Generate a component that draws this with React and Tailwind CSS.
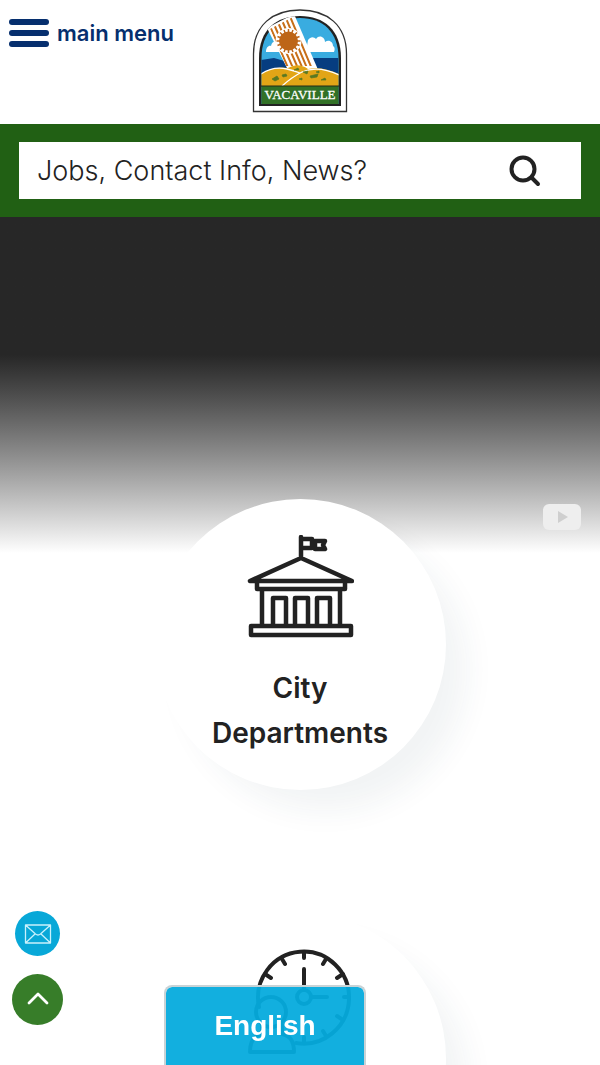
import React from "react";

function TownSeal() {
  return (
    <svg viewBox="0 0 120 125" className="h-[125px] w-[120px]" role="img" aria-label="Vacaville">
      <defs>
        <clipPath id="scene">
          <path d="M21.500 104V58C21.500 32 37 18 60 18S98.500 32 98.500 58V104Z" />
        </clipPath>
        <clipPath id="band">
          <path d="M19 106V58C19 30 36 16 60 16S101 30 101 58V106Z" />
        </clipPath>
        <clipPath id="ray">
          <path d="M30 29L53 17L73 66L46 66Z" />
        </clipPath>
      </defs>
      <path d="M13.5 111.500V54C13.500 25 33 10 60 10S106.500 25 106.500 54V111.500Z" fill="#fff" stroke="#333" strokeWidth="1.300" />
      <path d="M19 106V58C19 30 36 16 60 16S101 30 101 58V106Z" fill="#222" />
      <path d="M21.500 104V58C21.500 32 37 18 60 18S98.500 32 98.500 58V104Z" fill="#39ace0" />
      <g clipPath="url(#scene)">
        <path d="M26 52c0-5 3-7 5-6c1-7 9-5 9 0c3 0 4 3 4 6z" fill="#fff" />
        <path d="M66 52l2-12c3-4 6-3 8-1c3-5 9-2 9 3c4-3 8 0 8 4c2 1 2 4 1 6z" fill="#fff" />
        <path d="M21 60l13-2l14 4l26-4h24.500v16h-77.500z" fill="#063d80" />
      </g>
      <path clipPath="url(#band)" d="M27 28L54 14L79 72L48 70Z" fill="#fff" />
      <g clipPath="url(#ray)">
        <path d="M29 24L49 70M33 22L53 68M37 20L57 66M41 18L62 67M45 16L67 68M49 14L72 69" stroke="#c86f19" strokeWidth="2" />
      </g>
      <g clipPath="url(#scene)">
        <circle cx="48.500" cy="41" r="13" fill="#fff" />
        <path d="M48.500 29v24M36.500 41h24M40 32.500l17 17M57 32.500l-17 17M44 30l9 22M53 30l-9 22M37.500 36.500l22 9M37.500 45.500l22-9" stroke="#bd6518" strokeWidth="1.500" />
        <circle cx="48.500" cy="41" r="9.500" fill="#bd6518" />
        <path d="M21 74q12-8 27-6q10-6 20 1q14-3 31 5v12h-78z" fill="#e2a516" />
        <path d="M21 74q12-8 26-5q8 2 13 4M42 86q10-9 20-14q16-7 37 3" fill="none" stroke="#fff" strokeWidth="1.300" />
        <path d="M32 79l5-3l2 3l-4 2zM42 75l4-1l1 2l-4 1zM54 70l4-2l1 2zM63 72l5-1l-1 3zM70 76l8-2l-1 3l-6 1zM81 80l4-2l1 2zM59 79l3-1v2zM76 72l3-1v2z" fill="#587923" stroke="#587923" strokeWidth="0.700" />
        <path d="M21 86h78v18h-78z" fill="#327126" />
      </g>
      <path d="M21 86h78" stroke="#252a16" strokeWidth="1" />
      <text x="60" y="99" textAnchor="middle" fontFamily="Liberation Serif, serif" fontSize="13" fill="#fff" stroke="#fff" strokeWidth="0.300">VACAVILLE</text>
    </svg>
  );
}

function CityHallIcon() {
  return (
    <svg viewBox="0 0 108 104" className="h-[104px] w-[108px]" fill="none" stroke="#222" strokeWidth="4.500" strokeLinecap="round" strokeLinejoin="round" aria-hidden="true">
      <path d="M55 23V2M55 4h11v9H55M66 6h13l-2 4l2 4H69V6M55 23L4 46h102zM11 46v8h88v-8M16 54v37M94 54v37M5 91h100v9H5zM27 91V63h13v28M49 91V63h13v28M71 91V63h13v28" />
    </svg>
  );
}

function ClockIcon() {
  return (
    <svg viewBox="0 0 108 108" className="h-[108px] w-[108px] overflow-visible" fill="none" stroke="#222" strokeWidth="4" strokeLinecap="round" strokeLinejoin="round" aria-hidden="true">
      <path d="M13 58A45.500 46 0 1 1 50 94" />
      <circle cx="58" cy="48" r="7" />
      <path d="M58 41V20M65 48h16M58 3v6M36 10l3 5M80 10l-3 5M19 25l6 4M97 25l-6 4M103 48h-5M97 71l-6-4M80 87l-3-5M58 94v-6" />
      <circle cx="25" cy="63" r="15" />
      <path d="M16 76v9q-12 2-12 18h44q0-16-12-18v-9" />
    </svg>
  );
}

function ServiceLink({ icon, children }) {
  return (
    <a href="#services" className="flex size-[291px] shrink-0 flex-col items-center rounded-full bg-white px-12 pt-9 text-center text-[28px] leading-[45px] font-semibold text-[#222] shadow-[25px_25px_30px_-4px_rgba(40,65,90,0.06)]">
      {icon}
      <span className="mt-[27px]">{children}</span>
    </a>
  );
}

export default function App() {
  return (
    <div className="relative h-screen overflow-hidden bg-white font-['Inter',sans-serif]">
      <header className="grid h-[124px] grid-cols-[1fr_120px_1fr] items-start">
        <button type="button" className="mt-[17px] ml-[9px] flex items-center gap-2 text-[22px] leading-8 font-semibold text-[#062f6e]">
          <span className="flex w-10 flex-col gap-[5px]" aria-hidden="true">
            <span className="h-[6px] rounded-full bg-[#062f6e]" />
            <span className="h-[6px] rounded-full bg-[#062f6e]" />
            <span className="h-[6px] rounded-full bg-[#062f6e]" />
          </span>
          main menu
        </button>
        <a href="#home" className="h-[124px]">
          <TownSeal />
        </a>
      </header>

      <form className="bg-[#216014] px-[19px] py-[18px]" onSubmit={(e) => e.preventDefault()}>
        <div className="flex h-[57px] items-center bg-white pr-10 pl-[18px]">
          <input type="text" aria-label="Search" placeholder="Jobs, Contact Info, News?" className="h-full min-w-0 flex-1 text-[27px] font-light text-[#222] outline-none placeholder:text-[#222]" />
          <button type="submit" aria-label="Submit search">
            <svg viewBox="0 0 32 32" className="size-8" fill="none" stroke="#222" strokeWidth="4" strokeLinecap="round">
              <circle cx="14" cy="14" r="11.500" />
              <path d="M22.500 22.500L29 29" />
            </svg>
          </button>
        </div>
      </form>

      <main>
        <section className="flex h-[336px] items-end justify-end bg-linear-to-b from-[#272727] from-41% to-white px-[18px] pb-[22px]">
          <a href="#video" aria-label="Watch video">
            <svg viewBox="0 0 40 28" className="h-7 w-10">
              <rect x="1" y="1" width="38" height="26" rx="6" fill="#eeeeee" />
              <path d="M16 8l10 6l-10 6z" fill="#cfcfcf" />
            </svg>
          </a>
        </section>
        <nav className="-mt-[54px] flex flex-col items-center gap-[123px]" aria-label="City services">
          <ServiceLink icon={<CityHallIcon />}>City Departments</ServiceLink>
          <ServiceLink icon={<ClockIcon />} />
        </nav>
      </main>

      <div className="fixed bottom-10 left-3 flex flex-col items-center gap-[18px]">
        <a href="#contact" aria-label="Email us" className="flex size-[45px] items-center justify-center rounded-full bg-[#08a8d8]">
          <svg viewBox="0 0 28 20" className="h-5 w-7" fill="none" stroke="#c9f1fc" strokeWidth="1.300" strokeLinejoin="round">
            <path d="M1.500 1h25v18h-25zM1.500 1l10 9q2.500 2 5 0l10-9M1.500 19l9.500-9M26.500 19L17 10" />
          </svg>
        </a>
        <button type="button" aria-label="Back to top" className="flex size-[51px] items-center justify-center rounded-full bg-[#377d29]">
          <svg viewBox="0 0 22 14" className="-mt-1 h-[14px] w-[22px]" fill="none" stroke="#fff" strokeWidth="2.800" strokeLinecap="round" strokeLinejoin="round">
            <path d="M2 12l9-9l9 9" />
          </svg>
        </button>
      </div>

      <div className="pointer-events-none fixed inset-x-0 bottom-0 flex justify-center">
        <button type="button" className="pointer-events-auto mr-[70px] h-20 w-[202px] rounded-t-lg border-2 border-b-0 border-[#c9d3d6] bg-[#05abdd]/95 bg-clip-padding font-['Liberation_Sans',Arial,sans-serif] text-[28px] font-bold text-white">
          English
        </button>
      </div>
    </div>
  );
}
